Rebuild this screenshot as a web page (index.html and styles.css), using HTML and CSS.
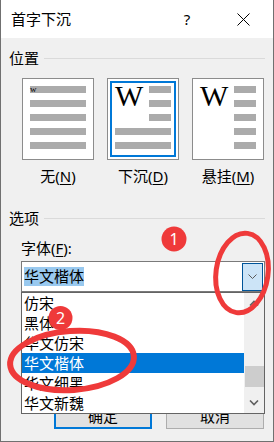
FILE: index.html
```html
<!DOCTYPE html>
<html lang="zh-CN">
<head>
  <meta charset="UTF-8" />
  <title>首字下沉</title>
  <link rel="stylesheet" href="styles.css">
</head>
<body>
  <div class="dialog">
    <div class="titlebar">
      <span class="title">首字下沉</span>
      <span class="help">?</span>
      <span class="close">
        <svg width="13" height="13" viewBox="0 0 13 13"><path d="M0.5 0.5 L12.5 12.5 M12.5 0.5 L0.5 12.5" stroke="#000" stroke-width="1" fill="none"/></svg>
      </span>
    </div>

    <div class="body">
      <div class="group-head"><span>位置</span><i class="rule"></i></div>

      <div class="tiles">
        <div class="tile-col">
          <div class="tile tile-none">
            <div class="bar bar-w"><span class="mini-w">w</span></div>
            <div class="bar"></div>
            <div class="bar"></div>
            <div class="bar"></div>
            <div class="bar"></div>
          </div>
          <div class="tile-label">无(<u>N</u>)</div>
        </div>
        <div class="tile-col">
          <div class="tile tile-drop selected">
            <span class="big-w">W</span>
            <div class="bar short"></div>
            <div class="bar short"></div>
            <div class="bar short"></div>
            <div class="bar full"></div>
            <div class="bar full"></div>
          </div>
          <div class="tile-label">下沉(<u>D</u>)</div>
        </div>
        <div class="tile-col">
          <div class="tile tile-hang">
            <span class="big-w">W</span>
            <div class="bar short"></div>
            <div class="bar short"></div>
            <div class="bar short"></div>
            <div class="bar short"></div>
            <div class="bar short"></div>
          </div>
          <div class="tile-label">悬挂(<u>M</u>)</div>
        </div>
      </div>

      <div class="group-head options-head"><span>选项</span><i class="rule"></i></div>

      <div class="field-label">字体(<u>F</u>):</div>
      <div class="combo">
        <div class="combo-input">
          <span class="combo-value">华文楷体</span>
          <span class="combo-btn">
            <svg width="9" height="5" viewBox="0 0 9 5"><path d="M0.5 0.5 L4.5 4.5 L8.5 0.5" stroke="#5a5a5a" stroke-width="1" fill="none"/></svg>
          </span>
        </div>
        <div class="combo-list">
          <ul class="items">
            <li>仿宋</li>
            <li>黑体</li>
            <li>华文仿宋</li>
            <li class="active">华文楷体</li>
            <li>华文细黑</li>
            <li>华文新魏</li>
          </ul>
          <div class="scrollbar">
            <span class="arrow">
              <svg width="10" height="6" viewBox="0 0 10 6"><path d="M1 5.5 L5 1.5 L9 5.5" stroke="#606060" stroke-width="1.6" fill="none"/></svg>
            </span>
            <div class="track"><div class="thumb"></div></div>
            <span class="arrow">
              <svg width="10" height="6" viewBox="0 0 10 6"><path d="M1 0.5 L5 4.5 L9 0.5" stroke="#606060" stroke-width="1.6" fill="none"/></svg>
            </span>
          </div>
        </div>
      </div>

      <div class="buttons">
        <button class="btn btn-default">确定</button>
        <button class="btn">取消</button>
      </div>
    </div>

    <svg class="marks" width="274" height="442" viewBox="0 0 274 442">
      <ellipse cx="242" cy="273" rx="26" ry="40" transform="rotate(8 242 273)" fill="none" stroke="#ef3a3a" stroke-width="5"/>
      <ellipse cx="72" cy="360.5" rx="62" ry="29.5" transform="rotate(-4 72 360.5)" fill="none" stroke="#ef3a3a" stroke-width="6"/>
      <circle cx="174" cy="239" r="12.5" fill="#ef3a3a"/>
      <text x="174" y="245" class="mark-num">1</text>
      <circle cx="60.5" cy="318" r="12" fill="#ef3a3a"/>
      <text x="60.5" y="324" class="mark-num">2</text>
    </svg>
  </div>
</body>
</html>
```

FILE: styles.css
```css
* { box-sizing: border-box; margin: 0; padding: 0; }
html, body { width: 100%; height: 100%; }
body {
  background: #f0f0f0;
  font-family: "Noto Sans", "Noto Sans CJK SC", sans-serif;
  font-size: 15px;
  color: #000;
}
.dialog {
  position: relative;
  width: 274px;
  height: 442px;
  border: 1px solid #707070;
  border-top: none;
  background: #f0f0f0;
  display: flex;
  flex-direction: column;
  overflow: hidden;
}
.titlebar {
  height: 38px;
  background: #fff;
  display: flex;
  align-items: center;
  flex-shrink: 0;
}
.title { padding-left: 10px; line-height: 20px; }
.help {
  margin-left: auto;
  margin-right: 21px;
  width: 24px;
  text-align: center;
  line-height: 20px;
  font-size: 15px;
}
.close {
  width: 46px;
  margin-right: 7px;
  height: 13px;
  display: flex;
  justify-content: center;
}
.body {
  flex: 1;
  padding: 10px 8px 12px 8px;
  display: flex;
  flex-direction: column;
}
.group-head {
  display: flex;
  align-items: center;
  height: 20px;
  line-height: 20px;
}
.rule {
  flex: 1;
  height: 1px;
  background: #dadada;
  margin-left: 5px;
}
.options-head { margin-top: 22px; }

/* position tiles */
.tiles {
  display: flex;
  gap: 13px;
  margin-top: 10px;
  padding-left: 13px;
}
.tile-col { width: 72px; }
.tile {
  width: 72px;
  height: 82px;
  background: #fff;
  border: 1px solid #8c8c8c;
  padding: 7px;
  display: grid;
  grid-template-rows: repeat(5, 7px);
  row-gap: 7px;
}
.tile.selected { box-shadow: inset 0 0 0 2px #fff, inset 0 0 0 4px #0078d7; }
.bar { background: #ababab; height: 7px; }
.bar-w { position: relative; }
.mini-w {
  position: absolute;
  left: 0;
  top: -1px;
  font-family: "Liberation Serif", serif;
  font-size: 9px;
  line-height: 8px;
  color: #000;
}
.tile-drop, .tile-hang { grid-template-columns: 34px 22px; }
.big-w {
  grid-column: 1;
  grid-row: 1 / 4;
  font-family: "Liberation Serif", serif;
  font-size: 30px;
  line-height: 30px;
  margin-top: -5px;
  color: #000;
}
.short { grid-column: 2; }
.tile-drop .full { grid-column: 1 / 3; }
.tile-label {
  margin-top: 6px;
  height: 20px;
  line-height: 20px;
  text-align: center;
  white-space: nowrap;
}
u { text-underline-offset: 2px; }

/* font combo */
.field-label {
  margin-top: 10px;
  padding-left: 12px;
  line-height: 20px;
}
.combo {
  position: relative;
  margin-top: 3px;
  margin-left: 12px;
  z-index: 2;
}
.combo-input {
  height: 31px;
  background: #fff;
  border: 1px solid #7a7a7a;
  display: flex;
  align-items: center;
}
.combo-value {
  margin-left: 2px;
  background: #99c9ef;
  line-height: 19px;
  height: 19px;
}
.combo-btn {
  margin-left: auto;
  margin-right: 1px;
  width: 21px;
  height: 28px;
  background: #cce4f7;
  border: 1px solid #005499;
  display: flex;
  align-items: center;
  justify-content: center;
}
.combo-list {
  position: absolute;
  top: 31px;
  left: 0;
  width: 244px;
  height: 122px;
  background: #fff;
  border: 1px solid #646464;
  display: flex;
  overflow: hidden;
}
.items { flex: 1; list-style: none; }
.items li {
  height: 20px;
  line-height: 20px;
  padding-left: 2px;
  white-space: nowrap;
}
.items li.active { background: #0078d7; color: #fff; }
.scrollbar {
  width: 20px;
  background: #f0f0f0;
  display: flex;
  flex-direction: column;
}
.arrow {
  height: 20px;
  display: flex;
  align-items: center;
  justify-content: center;
}
.track { flex: 1; }
.thumb {
  margin-top: 53px;
  margin-left: 1px;
  height: 21px;
  background: #cdcdcd;
}

/* dialog buttons */
.buttons {
  margin-top: auto;
  display: flex;
  justify-content: flex-end;
  gap: 14px;
  padding-right: 1px;
}
.btn {
  width: 98px;
  height: 28px;
  background: #e1e1e1;
  border: 1px solid #adadad;
  font-family: inherit;
  font-size: 15px;
  color: #000;
}
.btn-default { border: 2px solid #0078d7; }

.marks {
  position: absolute;
  left: -1px;
  top: 0;
  z-index: 5;
  pointer-events: none;
}
.mark-num {
  fill: #fff;
  font-family: "Noto Sans", sans-serif;
  font-size: 16px;
  text-anchor: middle;
}
```
